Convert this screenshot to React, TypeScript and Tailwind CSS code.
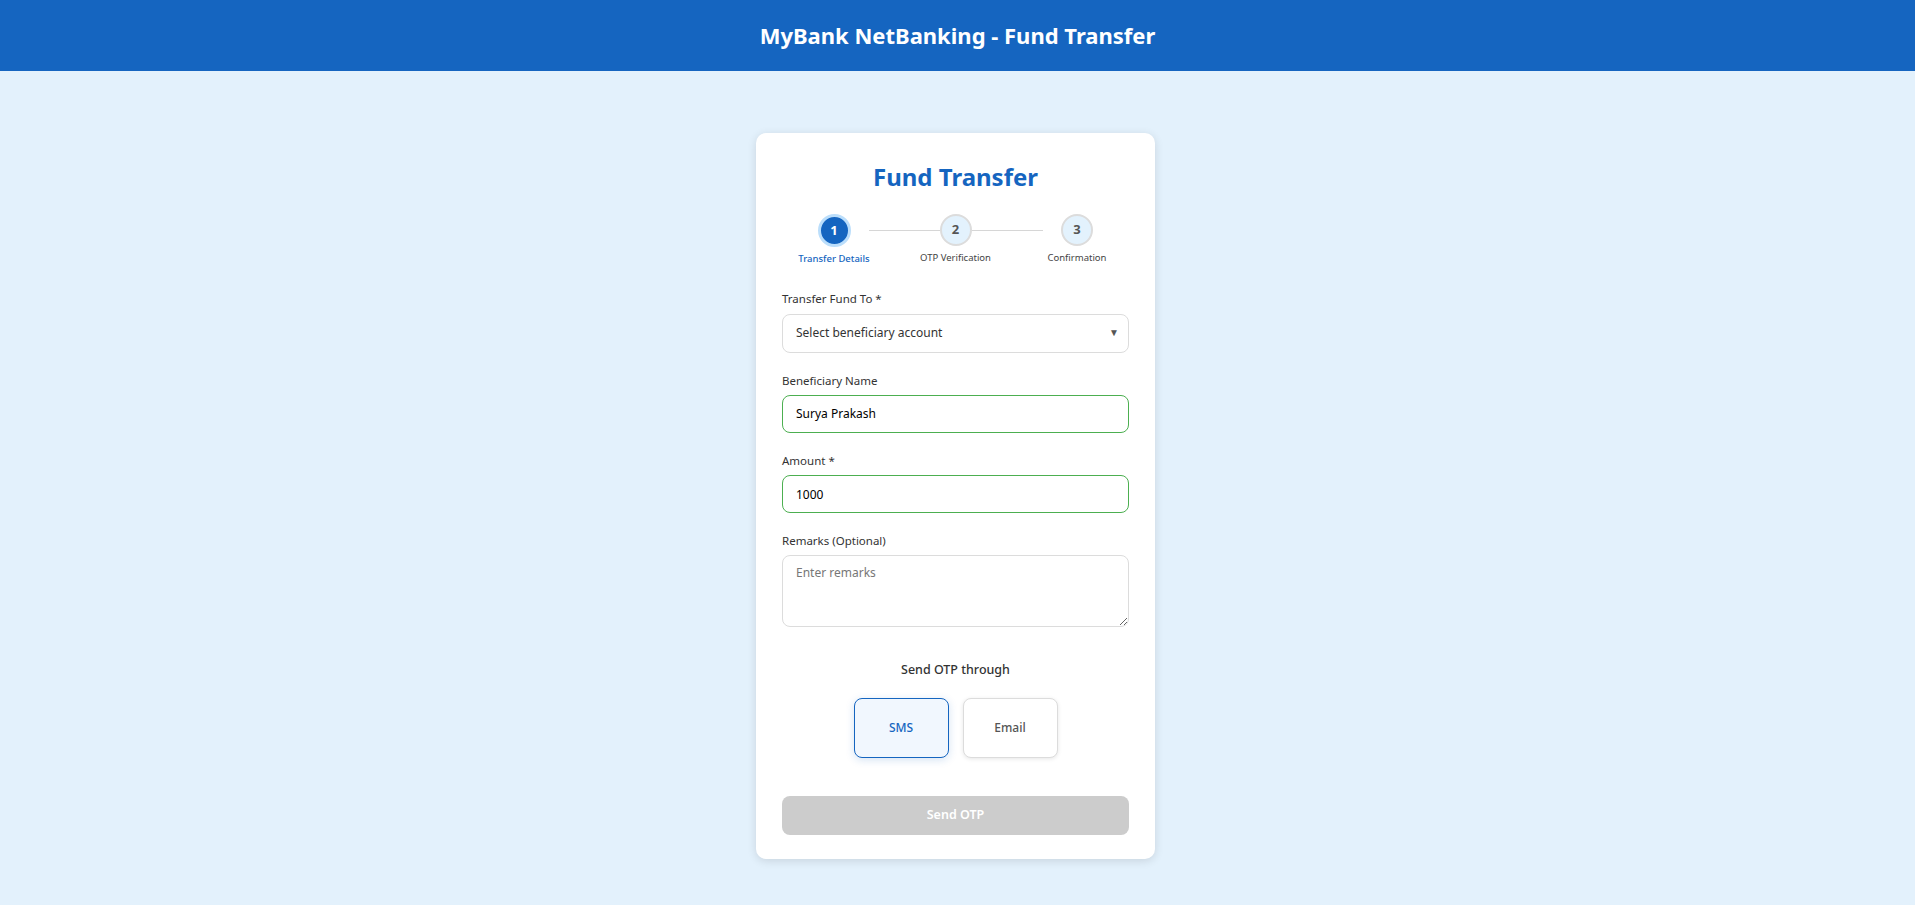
import { useState } from "react";

const FONT = { fontFamily: '"Noto Sans", "Open Sans", Arial, sans-serif' };

function Stepper() {
  const steps = [
    { n: 1, label: "Transfer Details" },
    { n: 2, label: "OTP Verification" },
    { n: 3, label: "Confirmation" },
  ];
  return (
    <div className="relative mt-[17px] flex justify-between">
      {/* connector lines */}
      <div className="absolute left-[87px] top-[16px] h-px w-[71px] bg-[#d6d6d6]" />
      <div className="absolute left-[190px] top-[16px] h-px w-[71px] bg-[#d6d6d6]" />
      {steps.map((s) => {
        const active = s.n === 1;
        return (
          <div key={s.n} className="relative flex w-[104px] flex-col items-center">
            <div
              className={
                active
                  ? "flex h-[33px] w-[33px] items-center justify-center rounded-full border-[3px] border-[#bbdefb] bg-[#1565c0] text-[13px] font-bold text-white"
                  : "flex h-[32px] w-[32px] items-center justify-center rounded-full border-2 border-[#dcdcdc] bg-[#e3f2fd] text-[13px] font-bold text-[#555]"
              }
            >
              {s.n}
            </div>
            <span
              className={
                active
                  ? "mt-[5px] text-[9.5px] font-medium text-[#1565c0]"
                  : "mt-[5px] text-[9.5px] text-[#444]"
              }
            >
              {s.label}
            </span>
          </div>
        );
      })}
    </div>
  );
}

export default function App() {
  const [channel, setChannel] = useState<"sms" | "email">("sms");
  const [remarks, setRemarks] = useState("");

  const optionOn =
    "h-[60px] w-[95px] rounded-[8px] border border-[#1565c0] bg-[#f1f7fe] text-[12px] font-medium text-[#1565c0] shadow-[0_2px_8px_rgba(21,101,192,0.18)]";
  const optionOff =
    "h-[60px] w-[95px] rounded-[8px] border border-[#dcdcdc] bg-white text-[12px] font-medium text-[#555] shadow-[0_1px_4px_rgba(0,0,0,0.1)]";

  return (
    <div className="min-h-[905px] bg-[#e3f1fc]" style={FONT}>
      <header className="flex h-[71px] items-center justify-center bg-[#1565c0]">
        <h1 className="text-[22px] font-bold text-white">MyBank NetBanking - Fund Transfer</h1>
      </header>

      <div className="flex justify-center pt-[62px] pr-[4px] pb-[46px]">
        <div className="w-[399px] rounded-[10px] bg-white px-[26px] pt-[24px] pb-[24px] shadow-[0_2px_10px_rgba(0,0,0,0.12)]">
          <h2 className="text-center text-[24px] leading-[40px] font-bold text-[#1565c0]">Fund Transfer</h2>

          <Stepper />

          <div className="mt-[24px]">
            <label className="block text-[11.5px] text-[#333]">Transfer Fund To *</label>
            <div className="relative mt-[6px]">
              <select className="h-[39px] w-full appearance-none rounded-[8px] border border-[#dcdcdc] bg-white px-[13px] text-[12px] text-[#333] outline-none">
                <option>Select beneficiary account</option>
              </select>
              <span className="pointer-events-none absolute right-[10px] top-[11px] text-[10px] text-[#555]">▼</span>
            </div>
          </div>

          <div className="mt-[19px]">
            <label className="block text-[11.5px] text-[#333]">Beneficiary Name</label>
            <input
              readOnly
              value="Surya Prakash"
              className="mt-[6px] h-[38px] w-full rounded-[8px] border border-[#4caf50] bg-white px-[13px] text-[12px] text-black outline-none"
            />
          </div>

          <div className="mt-[19px]">
            <label className="block text-[11.5px] text-[#333]">Amount *</label>
            <input
              readOnly
              value="1000"
              className="mt-[6px] h-[38px] w-full rounded-[8px] border border-[#4caf50] bg-white px-[13px] text-[12px] text-black outline-none"
            />
          </div>

          <div className="mt-[19px]">
            <label className="block text-[11.5px] text-[#333]">Remarks (Optional)</label>
            <textarea
              value={remarks}
              onChange={(e) => setRemarks(e.target.value)}
              placeholder="Enter remarks"
              className="mt-[6px] block h-[72px] w-full rounded-[8px] border border-[#dcdcdc] bg-white px-[13px] py-[8px] text-[12px] text-[#333] outline-none placeholder:text-[#777]"
            />
          </div>

          <p className="mt-[34px] text-center text-[12.5px] font-medium text-[#333]">Send OTP through</p>

          <div className="mt-[18px] flex justify-center gap-[14px]">
            <button onClick={() => setChannel("sms")} className={channel === "sms" ? optionOn : optionOff}>
              SMS
            </button>
            <button onClick={() => setChannel("email")} className={channel === "email" ? optionOn : optionOff}>
              Email
            </button>
          </div>

          <button
            disabled
            className="mt-[38px] h-[39px] w-full rounded-[8px] bg-[#cccccc] text-[12.5px] font-semibold text-white"
          >
            Send OTP
          </button>
        </div>
      </div>
    </div>
  );
}
